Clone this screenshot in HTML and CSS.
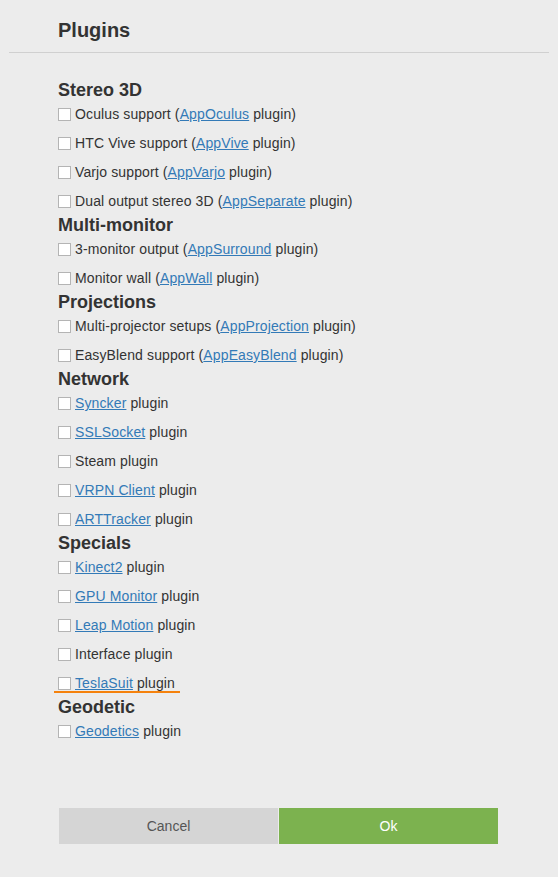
FILE: index.html
```html
<!DOCTYPE html>
<html>
<head>
<meta charset="utf-8">
<link rel="stylesheet" href="styles.css">
</head>
<body>
<div class="dialog">
  <div class="header"><h1 class="title">Plugins</h1></div>
  <div class="content">
    <section class="group">
      <h2 class="group-title">Stereo 3D</h2>
      <label class="row"><span class="box"></span><span>Oculus support (<a href="#">AppOculus</a> plugin)</span></label>
      <label class="row"><span class="box"></span><span>HTC Vive support (<a href="#">AppVive</a> plugin)</span></label>
      <label class="row"><span class="box"></span><span>Varjo support (<a href="#">AppVarjo</a> plugin)</span></label>
      <label class="row"><span class="box"></span><span>Dual output stereo 3D (<a href="#">AppSeparate</a> plugin)</span></label>
    </section>
    <section class="group">
      <h2 class="group-title">Multi-monitor</h2>
      <label class="row"><span class="box"></span><span>3-monitor output (<a href="#">AppSurround</a> plugin)</span></label>
      <label class="row"><span class="box"></span><span>Monitor wall (<a href="#">AppWall</a> plugin)</span></label>
    </section>
    <section class="group">
      <h2 class="group-title">Projections</h2>
      <label class="row"><span class="box"></span><span>Multi-projector setups (<a href="#">AppProjection</a> plugin)</span></label>
      <label class="row"><span class="box"></span><span>EasyBlend support (<a href="#">AppEasyBlend</a> plugin)</span></label>
    </section>
    <section class="group">
      <h2 class="group-title">Network</h2>
      <label class="row"><span class="box"></span><span><a href="#">Syncker</a> plugin</span></label>
      <label class="row"><span class="box"></span><span><a href="#">SSLSocket</a> plugin</span></label>
      <label class="row"><span class="box"></span><span>Steam plugin</span></label>
      <label class="row"><span class="box"></span><span><a href="#">VRPN Client</a> plugin</span></label>
      <label class="row"><span class="box"></span><span><a href="#">ARTTracker</a> plugin</span></label>
    </section>
    <section class="group">
      <h2 class="group-title">Specials</h2>
      <label class="row"><span class="box"></span><span><a href="#">Kinect2</a> plugin</span></label>
      <label class="row"><span class="box"></span><span><a href="#">GPU Monitor</a> plugin</span></label>
      <label class="row"><span class="box"></span><span><a href="#">Leap Motion</a> plugin</span></label>
      <label class="row"><span class="box"></span><span>Interface plugin</span></label>
      <label class="row row-marked"><span class="box"></span><span><a href="#">TeslaSuit</a> plugin</span></label>
    </section>
    <section class="group">
      <h2 class="group-title">Geodetic</h2>
      <label class="row"><span class="box"></span><span><a href="#">Geodetics</a> plugin</span></label>
    </section>
  </div>
  <div class="actions">
    <button class="btn btn-cancel">Cancel</button>
    <button class="btn btn-ok">Ok</button>
  </div>
</div>
</body>
</html>
```
FILE: styles.css
```css
* { box-sizing: border-box; }
html, body {
  margin: 0;
  padding: 0;
  background: #ececec;
}
body {
  font-family: "Liberation Sans", Arial, sans-serif;
  color: #333;
  font-size: 14px;
  width: 558px;
  height: 877px;
  overflow: hidden;
}
.dialog {
  display: flex;
  flex-direction: column;
}
.header {
  margin: 0 9px;
  padding: 18px 0 10px 49px;
  border-bottom: 1px solid #d0d0d0;
}
.title {
  margin: 0;
  font-size: 20px;
  line-height: 24px;
  font-weight: bold;
  color: #333;
}
.content {
  padding: 27px 0 0 58px;
  display: flex;
  flex-direction: column;
  gap: 4px;
}
.group {
  display: flex;
  flex-direction: column;
  gap: 9px;
}
.group-title {
  margin: 0 0 -5px 0;
  font-size: 18px;
  line-height: 20px;
  font-weight: bold;
  color: #333;
}
.row {
  display: flex;
  align-items: center;
  height: 20px;
  line-height: 20px;
  align-self: flex-start;
  letter-spacing: 0.12px;
}
.box {
  width: 13px;
  height: 13px;
  background: #fff;
  border: 1px solid #b4b4b4;
  margin-right: 4px;
  flex: none;
}
.row a {
  color: #337ab7;
  text-decoration: underline;
}
.row-marked {
  margin-left: -4px;
  padding: 0 5px 0 4px;
  box-shadow: inset 0 -2px 0 #f5820d;
}
.actions {
  display: flex;
  gap: 1px;
  padding: 67px 0 0 59px;
}
.btn {
  width: 219px;
  height: 36px;
  border: none;
  font-family: "Liberation Sans", Arial, sans-serif;
  font-size: 14px;
  padding: 0;
  margin: 0;
}
.btn-cancel {
  background: #d5d5d5;
  color: #555;
}
.btn-ok {
  background: #7cb24f;
  color: #fff;
}
```
